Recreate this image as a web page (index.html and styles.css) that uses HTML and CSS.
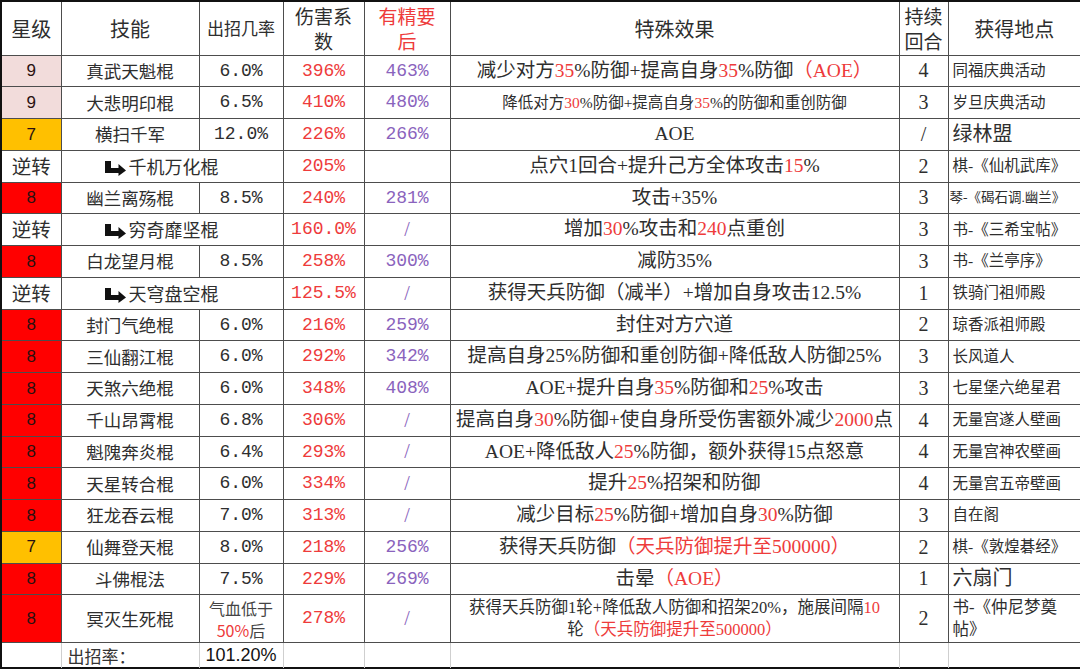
FILE: index.html
```html
<!DOCTYPE html>
<html lang="zh-CN">
<head>
<meta charset="utf-8">
<title>棍法技能表</title>
<link rel="stylesheet" href="styles.css">
</head>
<body>
<div class="sheet">
<table class="grid">
  <colgroup>
    <col class="c1"><col class="c2"><col class="c3"><col class="c4"><col class="c5"><col class="c6"><col class="c7"><col class="c8">
  </colgroup>
  <tr class="head">
    <td class="h20">星级</td>
    <td class="h20">技能</td>
    <td class="h17">出招几率</td>
    <td class="h2l"><span class="ln">伤害系</span><span class="ln">数</span></td>
    <td class="h2l red"><span class="ln">有精要</span><span class="ln">后</span></td>
    <td class="h20">特殊效果</td>
    <td class="h2l"><span class="ln">持续</span><span class="ln">回合</span></td>
    <td class="h20">获得地点</td>
  </tr>
  <tr class="row">
    <td class="star pink">9</td><td class="name">真武天魁棍</td><td class="num">6.0%</td><td class="num red">396%</td><td class="num purple">463%</td>
    <td class="eff">减少对方<span class="red">35</span>%防御+提高自身<span class="red">35</span>%防御<span class="red">（AOE）</span></td><td class="turn">4</td><td class="loc">同福庆典活动</td>
  </tr>
  <tr class="row">
    <td class="star pink">9</td><td class="name">大悲明印棍</td><td class="num">6.5%</td><td class="num red">410%</td><td class="num purple">480%</td>
    <td class="eff small">降低对方<span class="red">30</span>%防御+提高自身<span class="red">35</span>%的防御和重创防御</td><td class="turn">3</td><td class="loc">岁旦庆典活动</td>
  </tr>
  <tr class="row">
    <td class="star gold">7</td><td class="name">横扫千军</td><td class="num">12.0%</td><td class="num red">226%</td><td class="num purple">266%</td>
    <td class="eff">AOE</td><td class="turn">/</td><td class="loc big">绿林盟</td>
  </tr>
  <tr class="row">
    <td class="rev">逆转</td>
    <td class="revname" colspan="2"><svg class="arrow" viewBox="0 0 21 15"><path d="M0 0H6V7H13.5V3L21 9.5L13.5 15V12H0Z"/></svg><span>千机万化棍</span></td>
    <td class="num red">205%</td><td class="num purple"></td>
    <td class="eff">点穴1回合+提升己方全体攻击<span class="red">15</span>%</td><td class="turn">2</td><td class="loc">棋-《仙机武库》</td>
  </tr>
  <tr class="row">
    <td class="star redbg">8</td><td class="name">幽兰离殇棍</td><td class="num">8.5%</td><td class="num red">240%</td><td class="num purple">281%</td>
    <td class="eff">攻击+35%</td><td class="turn">3</td><td class="loc tiny">琴-《碣石调.幽兰》</td>
  </tr>
  <tr class="row">
    <td class="rev">逆转</td>
    <td class="revname" colspan="2"><svg class="arrow" viewBox="0 0 21 15"><path d="M0 0H6V7H13.5V3L21 9.5L13.5 15V12H0Z"/></svg><span>穷奇靡坚棍</span></td>
    <td class="num red">160.0%</td><td class="slash purple">/</td>
    <td class="eff">增加<span class="red">30</span>%攻击和<span class="red">240</span>点重创</td><td class="turn">3</td><td class="loc">书-《三希宝帖》</td>
  </tr>
  <tr class="row">
    <td class="star redbg">8</td><td class="name">白龙望月棍</td><td class="num">8.5%</td><td class="num red">258%</td><td class="num purple">300%</td>
    <td class="eff">减防35%</td><td class="turn">3</td><td class="loc">书-《兰亭序》</td>
  </tr>
  <tr class="row">
    <td class="rev">逆转</td>
    <td class="revname" colspan="2"><svg class="arrow" viewBox="0 0 21 15"><path d="M0 0H6V7H13.5V3L21 9.5L13.5 15V12H0Z"/></svg><span>天穹盘空棍</span></td>
    <td class="num red">125.5%</td><td class="slash purple">/</td>
    <td class="eff">获得天兵防御（减半）+增加自身攻击12.5%</td><td class="turn">1</td><td class="loc">铁骑门祖师殿</td>
  </tr>
  <tr class="row">
    <td class="star redbg">8</td><td class="name">封门气绝棍</td><td class="num">6.0%</td><td class="num red">216%</td><td class="num purple">259%</td>
    <td class="eff">封住对方穴道</td><td class="turn">2</td><td class="loc">琼香派祖师殿</td>
  </tr>
  <tr class="row">
    <td class="star redbg">8</td><td class="name">三仙翻江棍</td><td class="num">6.0%</td><td class="num red">292%</td><td class="num purple">342%</td>
    <td class="eff">提高自身25%防御和重创防御+降低敌人防御25%</td><td class="turn">3</td><td class="loc">长风道人</td>
  </tr>
  <tr class="row">
    <td class="star redbg">8</td><td class="name">天煞六绝棍</td><td class="num">6.0%</td><td class="num red">348%</td><td class="num purple">408%</td>
    <td class="eff">AOE+提升自身<span class="red">35</span>%防御和<span class="red">25</span>%攻击</td><td class="turn">3</td><td class="loc">七星堡六绝星君</td>
  </tr>
  <tr class="row">
    <td class="star redbg">8</td><td class="name">千山昂霄棍</td><td class="num">6.8%</td><td class="num red">306%</td><td class="slash purple">/</td>
    <td class="eff">提高自身<span class="red">30</span>%防御+使自身所受伤害额外减少<span class="red">2000</span>点</td><td class="turn">4</td><td class="loc">无量宫遂人壁画</td>
  </tr>
  <tr class="row">
    <td class="star redbg">8</td><td class="name">魁隗奔炎棍</td><td class="num">6.4%</td><td class="num red">293%</td><td class="slash purple">/</td>
    <td class="eff">AOE+降低敌人<span class="red">25</span>%防御，额外获得15点怒意</td><td class="turn">4</td><td class="loc">无量宫神农壁画</td>
  </tr>
  <tr class="row">
    <td class="star redbg">8</td><td class="name">天星转合棍</td><td class="num">6.0%</td><td class="num red">334%</td><td class="slash purple">/</td>
    <td class="eff">提升<span class="red">25</span>%招架和防御</td><td class="turn">4</td><td class="loc">无量宫五帝壁画</td>
  </tr>
  <tr class="row">
    <td class="star redbg">8</td><td class="name">狂龙吞云棍</td><td class="num">7.0%</td><td class="num red">313%</td><td class="slash purple">/</td>
    <td class="eff">减少目标<span class="red">25</span>%防御+增加自身<span class="red">30</span>%防御</td><td class="turn">3</td><td class="loc">自在阁</td>
  </tr>
  <tr class="row">
    <td class="star gold">7</td><td class="name">仙舞登天棍</td><td class="num">8.0%</td><td class="num red">218%</td><td class="num purple">256%</td>
    <td class="eff">获得天兵防御<span class="red">（天兵防御提升至500000）</span></td><td class="turn">2</td><td class="loc">棋-《敦煌碁经》</td>
  </tr>
  <tr class="row">
    <td class="star redbg">8</td><td class="name">斗佛棍法</td><td class="num">7.5%</td><td class="num red">229%</td><td class="num purple">269%</td>
    <td class="eff">击晕<span class="red">（AOE）</span></td><td class="turn">1</td><td class="loc big">六扇门</td>
  </tr>
  <tr class="tall">
    <td class="star redbg">8</td><td class="name">冥灭生死棍</td><td class="cond">气血低于<br><span class="red">50%</span>后</td><td class="num red">278%</td><td class="slash purple">/</td>
    <td class="eff two">获得天兵防御1轮+降低敌人防御和招架20%，施展间隔<span class="red">10</span><br>轮<span class="red">（天兵防御提升至500000）</span></td><td class="turn">2</td><td class="loc two">书-《仲尼梦奠<br>帖》</td>
  </tr>
  <tr class="sum">
    <td></td><td class="sumlabel">出招率：</td><td class="sumval">101.20%</td><td></td><td></td><td></td><td></td><td></td>
  </tr>
</table>
</div>
</body>
</html>
```

FILE: styles.css
```css
* { box-sizing: border-box; }

html, body {
  margin: 0;
  padding: 0;
  background: #ffffff;
}

body {
  width: 1080px;
  height: 670px;
  overflow: hidden;
  font-family: "Liberation Serif", "Noto Sans CJK SC", serif;
  color: #2e2e2e;
}

.sheet {
  width: 1080px;
  height: 669px;
  border-top: 2px solid #111;
  border-left: 2px solid #111;
  border-bottom: 2px solid #111;
}

.grid {
  width: 1078px;
  border-collapse: collapse;
  table-layout: fixed;
  border-style: hidden;
}

.c1 { width: 59px; }
.c2 { width: 138px; }
.c3 { width: 84px; }
.c4 { width: 81px; }
.c5 { width: 86px; }
.c6 { width: 449px; }
.c7 { width: 49px; }
.c8 { width: 132px; }

.grid td {
  border: 1px solid #4d4d4d;
  padding: 0;
  text-align: center;
  vertical-align: middle;
  line-height: 1.15;
  white-space: nowrap;
  overflow: hidden;
}

.head td { height: 53px; }
.row td { height: 31.75px; }
.tall td { height: 48px; }
.sum td {
  height: 25px;
  border-color: #cfcfcf;
}
.tall td { border-bottom-color: #4d4d4d; }

.h20 {
  font-family: "Noto Sans CJK SC", sans-serif;
  font-size: 20px;
}
.h17 {
  font-family: "Noto Sans CJK SC", sans-serif;
  font-size: 17px;
}
.h2l {
  font-family: "Noto Sans CJK SC", sans-serif;
  font-size: 19px;
}
.ln {
  display: block;
  line-height: 25px;
  height: 25px;
}

.red { color: #ee3b3b; }
.purple { color: #8a63bd; }

.star {
  font-family: "Liberation Sans", Arial, sans-serif;
  font-size: 17px;
  color: #2a1010;
}
.pink { background: #f2dcdb; }
.gold { background: #ffc000; }
.redbg { background: #ff0000; }

.rev {
  font-family: "Noto Sans CJK SC", sans-serif;
  font-size: 19.5px;
}

.name {
  font-family: "Noto Sans CJK SC", sans-serif;
  font-size: 17.5px;
}

.grid td.revname {
  text-align: left;
  padding-left: 43px;
  font-family: "Noto Sans CJK SC", sans-serif;
  font-size: 18px;
}
.arrow {
  display: inline-block;
  width: 21px;
  height: 15px;
  vertical-align: -2px;
  margin-right: 3px;
  fill: #111;
}

.num {
  font-family: "Liberation Mono", "Noto Sans CJK SC", monospace;
  font-size: 18px;
}

.slash {
  font-family: "Liberation Serif", serif;
  font-size: 20px;
}

.cond {
  font-family: "Noto Sans CJK SC", sans-serif;
  font-size: 16px;
  line-height: 22px !important;
  color: #444;
}

.eff {
  font-size: 19.5px;
}
.eff.small {
  font-size: 15.5px;
}
.eff.two {
  font-size: 16.5px;
  line-height: 22px !important;
}

.turn {
  font-family: "Liberation Serif", serif;
  font-size: 20px;
}

.grid td.loc {
  text-align: left;
  padding-left: 4px;
  font-size: 15.5px;
}
.grid td.loc.big { font-size: 20px; }
.grid td.loc.tiny { font-size: 13.5px; padding-left: 1px; }
.grid td.loc.two { font-size: 16.5px; line-height: 22px; }

.grid td.sumlabel {
  text-align: left;
  padding-left: 6px;
  font-family: "Noto Sans CJK SC", sans-serif;
  font-size: 17px;
  color: #333;
}
.grid td.sumval {
  text-align: left;
  padding-left: 6px;
  font-family: "Liberation Sans", Arial, sans-serif;
  font-size: 18px;
  color: #111;
}
```
